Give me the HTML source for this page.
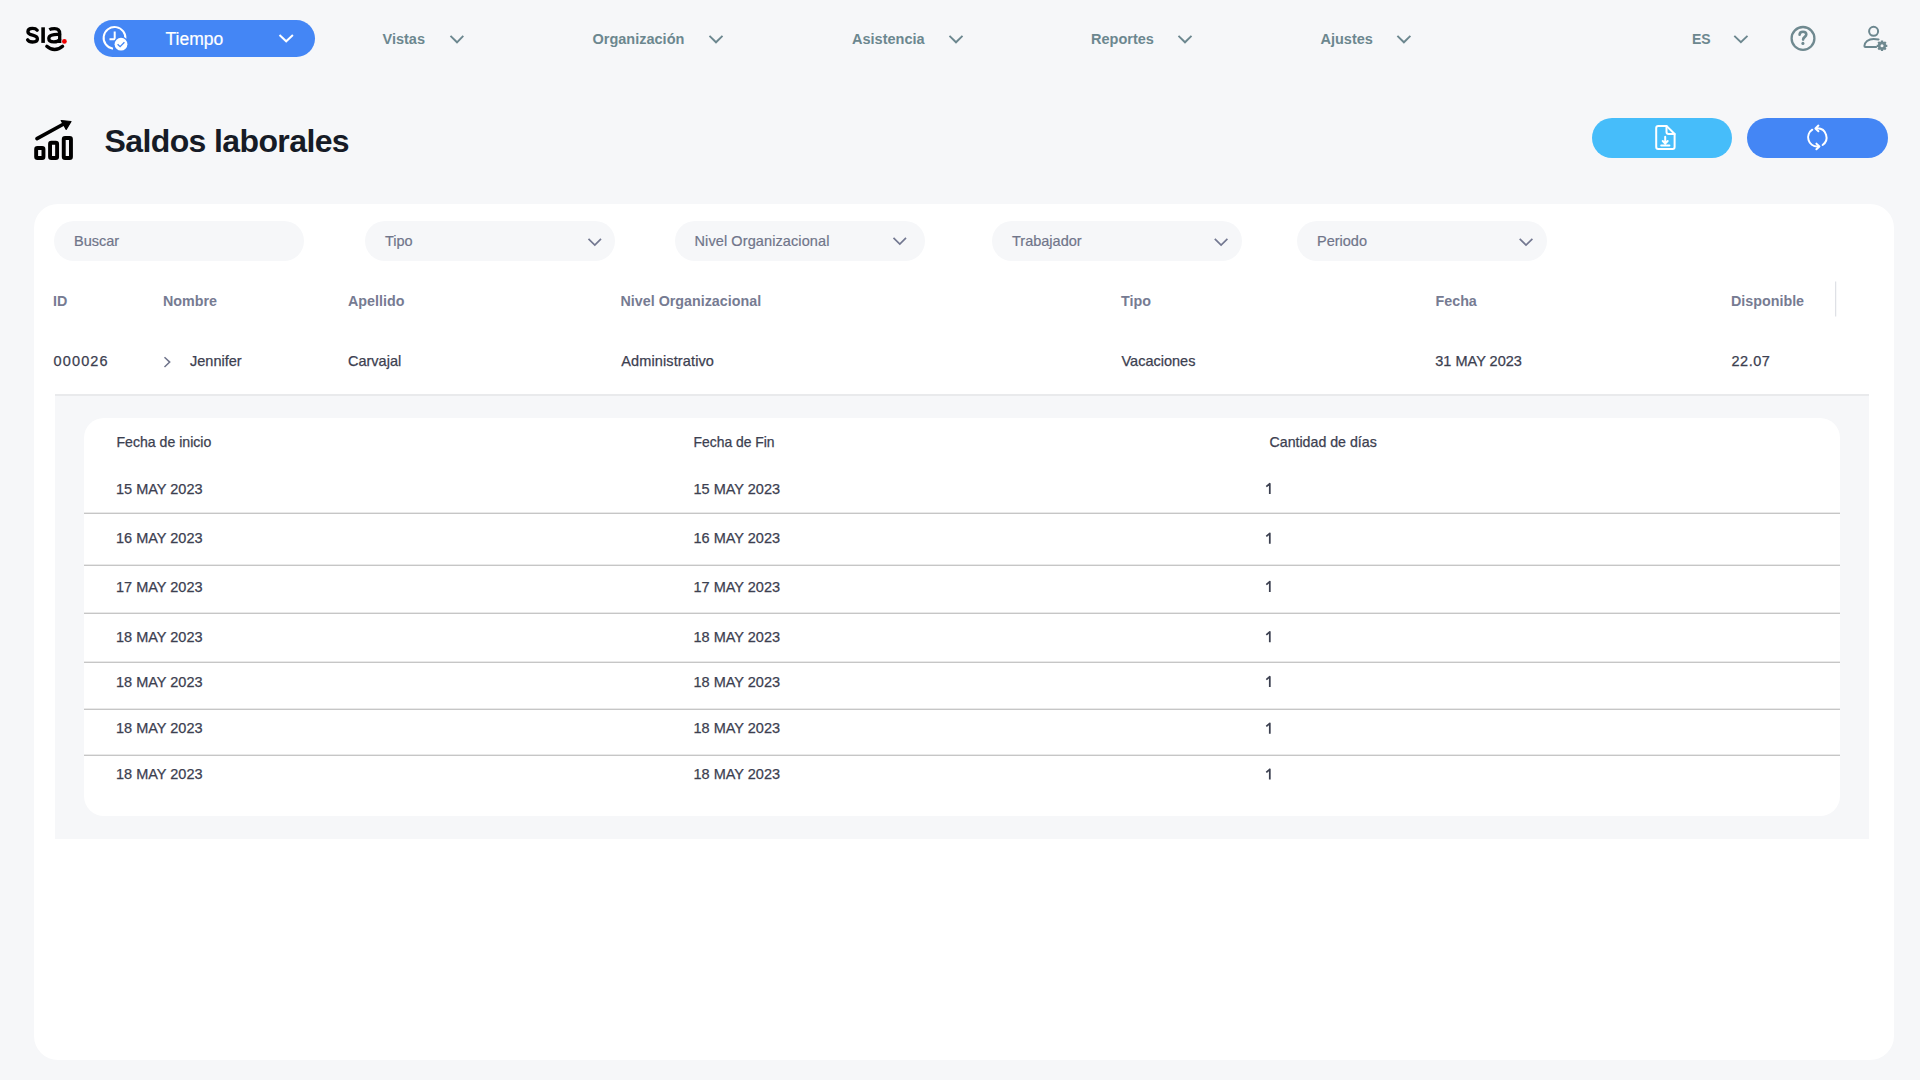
<!DOCTYPE html>
<html lang="es">
<head>
<meta charset="utf-8">
<title>Saldos laborales</title>
<style>
html,body{margin:0;padding:0;}
body{width:1920px;height:1080px;overflow:hidden;background:#F6F7F9;position:relative;font-family:"Liberation Sans",sans-serif;}
.a{position:absolute;white-space:nowrap;line-height:1;}
svg.a{overflow:visible;}
.nav{font-size:14.5px;font-weight:700;color:#6C878F;}
.ph{font-size:14.5px;color:#70758A;-webkit-text-stroke:0.2px #70758A;}
.th{font-size:14.3px;font-weight:700;color:#767B92;}
.td{font-size:14.5px;color:#3C4050;-webkit-text-stroke:0.25px #3C4050;}
.card{position:absolute;left:34px;top:204px;width:1859.5px;height:855.5px;background:#FFFFFF;border-radius:24px;}
.inp{position:absolute;top:221px;width:250px;height:40px;border-radius:20px;background:#F6F7F9;}
.line{position:absolute;left:84px;width:1756px;height:1px;background:#C6C6C6;box-shadow:0 -1px 0 #E9E9E9;}
</style>
</head>
<body>

<!-- ===== TOP NAV ===== -->
<svg class="a" style="left:0;top:0" width="1920" height="80" viewBox="0 0 1920 80">
  <!-- logo sia. -->
  <g fill="none" stroke="#000" stroke-width="3.3" stroke-linecap="round">
    <path d="M37.2 30.2 C36 28.6 34.2 28.4 32.4 28.4 C29.8 28.4 27.9 29.7 27.9 31.8 C27.9 34 30.2 34.6 32.6 35.2 C35.4 35.9 37.4 36.7 37.4 39 C37.4 41.3 35.2 42 32.6 42 C30.3 42 28.5 41.3 27.6 39.8"/>
    <path d="M43.1 27.3 V42.9" stroke-linecap="butt" stroke-width="3.6"/>
    <path d="M49.3 29.6 C50.6 28.9 52.4 28.6 54.6 28.6 C58.4 28.6 59.7 30.6 59.7 33.6 V42.9" stroke-linecap="butt"/>
    <path d="M59.6 34.6 C57 34.3 53.6 34.6 51.4 35.3 C49.6 35.9 48.8 37 48.8 38.6 C48.8 40.6 50.8 41.9 53.8 41.9 C56.6 41.9 58.8 41 59.6 39.6"/>
    <path d="M46.8 46.3 C51.5 50.6 57.8 50.6 62.6 46.3"/>
  </g>
  <circle cx="64.4" cy="41.4" r="2.4" fill="#F00000"/>
</svg>

<!-- Tiempo pill -->
<div class="a" style="left:94px;top:20px;width:221px;height:37px;border-radius:18.5px;background:#4486F5;"></div>
<svg class="a" style="left:0;top:0" width="340" height="80" viewBox="0 0 340 80">
  <path d="M125.3 39.5 A10.9 10.9 0 1 0 113 48.7" fill="none" stroke="#fff" stroke-width="2"/>
  <path d="M114.7 31.5 V39.3 H109.5" fill="none" stroke="#fff" stroke-width="2"/>
  <circle cx="121" cy="44.2" r="7.6" fill="#4486F5"/>
  <circle cx="121" cy="44.2" r="6.4" fill="#fff"/>
  <path d="M117.6 44.2 L120.1 46.7 L124.4 42.3" fill="none" stroke="#4486F5" stroke-width="1.3"/>
  <polyline points="279.5,35 286.2,41.3 292.9,35" fill="none" stroke="#fff" stroke-width="2"/>
</svg>
<div class="a" style="left:165.5px;top:31px;font-size:17.5px;color:#fff;-webkit-text-stroke:0.2px #fff;">Tiempo</div>

<div class="a nav" style="left:382.5px;top:31.8px;">Vistas</div>
<div class="a nav" style="left:592.5px;top:31.8px;">Organización</div>
<div class="a nav" style="left:852px;top:31.8px;">Asistencia</div>
<div class="a nav" style="left:1091px;top:31.8px;">Reportes</div>
<div class="a nav" style="left:1320.5px;top:31.8px;">Ajustes</div>
<div class="a nav" style="left:1692px;top:31.8px;font-size:14px;">ES</div>

<svg class="a" style="left:0;top:0" width="1920" height="80" viewBox="0 0 1920 80">
  <g fill="none" stroke="#6C878F" stroke-width="1.9">
    <polyline points="450.5,35.9 457,42.3 463.3,35.9"/>
    <polyline points="709.5,35.9 716,42.3 722.5,35.9"/>
    <polyline points="949.5,35.9 956,42.3 962.5,35.9"/>
    <polyline points="1178.5,35.9 1185,42.3 1191.5,35.9"/>
    <polyline points="1397.4,35.9 1403.9,42.3 1410.4,35.9"/>
    <polyline points="1734.3,35.9 1740.9,42.3 1747.5,35.9"/>
  </g>
  <!-- help -->
  <circle cx="1803" cy="38.4" r="11.4" fill="none" stroke="#6F8990" stroke-width="2.3"/>
  <path d="M799.6 0" fill="none"/>
  <path d="M1799.6 34.8 C1799.6 32.8 1801.1 31.8 1803 31.8 C1805 31.8 1806.3 33 1806.3 34.6 C1806.3 36.8 1803.1 37 1803.1 39.6" fill="none" stroke="#6F8990" stroke-width="2.6" stroke-linecap="round"/>
  <circle cx="1802.9" cy="43.4" r="1.55" fill="#6F8990"/>
  <!-- user settings -->
  <circle cx="1873.6" cy="31.3" r="4.5" fill="none" stroke="#6C878F" stroke-width="2"/>
  <path d="M1878.6 39.4 C1876.8 39 1875.3 38.9 1873.6 38.9 C1868.5 38.9 1864.4 42.3 1864.4 46.1 C1864.4 46.8 1864.8 47 1865.4 47 H1876.2" fill="none" stroke="#6C878F" stroke-width="2" stroke-linecap="round"/>
  <g transform="translate(1882,45.8)" fill="none" stroke="#6F8990">
    <circle cx="0" cy="0" r="2.9" stroke-width="2.6"/>
    <g stroke-width="2.3" stroke-linecap="butt">
      <path d="M0 -5.3 V5.3 M-5.3 0 H5.3 M-3.75 -3.75 L3.75 3.75 M-3.75 3.75 L3.75 -3.75"/>
    </g>
    <circle cx="0" cy="0" r="1.5" fill="#F6F7F9" stroke="none"/>
  </g>
</svg>

<!-- ===== TITLE ===== -->
<svg class="a" style="left:0;top:100px" width="100" height="80" viewBox="0 100 100 80">
  <g fill="none" stroke="#000" stroke-width="3.9" stroke-linejoin="round">
    <rect x="36.15" y="148.05" width="7.3" height="10" rx="1.3"/>
    <rect x="50.05" y="142.75" width="7.05" height="15.3" rx="1.3"/>
    <rect x="63.75" y="138.05" width="7.2" height="20" rx="1.3"/>
    <path d="M37 138.6 L65.5 123" stroke-linecap="round" stroke-width="3.7"/>
  </g>
  <path d="M61.2 120.5 L71 121.5 L66.2 129.4 Z" fill="#000" stroke="#000" stroke-width="1.2" stroke-linejoin="round"/>
</svg>
<div class="a" style="left:104.6px;top:125.2px;font-size:32px;font-weight:700;color:#161B26;letter-spacing:-0.62px;">Saldos laborales</div>

<!-- action buttons -->
<div class="a" style="left:1592px;top:118px;width:140px;height:40px;border-radius:20px;background:#46BDFA;"></div>
<div class="a" style="left:1747px;top:118px;width:140.5px;height:40px;border-radius:20px;background:#4486F5;"></div>
<svg class="a" style="left:1600px;top:110px" width="300" height="60" viewBox="1600 110 300 60">
  <g fill="none" stroke="#fff" stroke-width="2" stroke-linecap="round" stroke-linejoin="round">
    <path d="M1666.5 125.9 H1658.3 C1657.1 125.9 1656.2 126.8 1656.2 128 V147 C1656.2 148.2 1657.1 149 1658.3 149 H1672.6 C1673.8 149 1674.6 148.2 1674.6 147 V134 Z"/>
    <path d="M1666.5 125.9 V132 C1666.5 133.2 1667.4 134 1668.6 134 H1674.6"/>
    <path d="M1665.2 136.8 V143.4 M1662.7 141 L1665.2 143.5 L1667.7 141 M1661.2 145.4 H1669.4"/>
    <!-- refresh -->
    <path d="M1817.4 128.3 A9.2 9.2 0 0 1 1822.6 145"/>
    <path d="M1818.4 125.6 L1815.4 128.4 L1818.4 131.2"/>
    <path d="M1812.3 129.7 A9.2 9.2 0 0 0 1817.4 146.6"/>
    <path d="M1816.4 143.6 L1819.4 146.5 L1816.4 149.3"/>
  </g>
</svg>

<!-- ===== CARD ===== -->
<div class="card"></div>
<div class="inp" style="left:54px;"></div>
<div class="inp" style="left:365px;"></div>
<div class="inp" style="left:675px;"></div>
<div class="inp" style="left:992px;"></div>
<div class="inp" style="left:1297px;"></div>
<div class="a ph" style="left:74px;top:233.5px;">Buscar</div>
<div class="a ph" style="left:385px;top:233.5px;">Tipo</div>
<div class="a ph" style="left:694.5px;top:233.5px;letter-spacing:0.1px;">Nivel Organizacional</div>
<div class="a ph" style="left:1012px;top:233.5px;">Trabajador</div>
<div class="a ph" style="left:1317px;top:233.5px;">Periodo</div>
<svg class="a" style="left:0;top:200px" width="1920" height="200" viewBox="0 200 1920 200">
  <g fill="none" stroke="#737891" stroke-width="1.7">
    <polyline points="588.5,238.8 594.8,245 601,238.8"/>
    <polyline points="893.5,237.8 899.8,244 906,237.8"/>
    <polyline points="1214.8,238.8 1221.1,245 1227.4,238.8"/>
    <polyline points="1519.7,238.8 1526,245 1532.4,238.8"/>
  </g>
  <polyline points="164.5,357.3 169.7,362.1 164.5,367" fill="none" stroke="#6F748B" stroke-width="1.5"/>
  <rect x="1835.2" y="281.5" width="1" height="35" fill="#D8DAE0"/>
</svg>

<!-- table header -->
<div class="a th" style="left:53px;top:293.8px;">ID</div>
<div class="a th" style="left:163px;top:293.8px;">Nombre</div>
<div class="a th" style="left:348px;top:293.8px;">Apellido</div>
<div class="a th" style="left:620.5px;top:293.8px;">Nivel Organizacional</div>
<div class="a th" style="left:1121px;top:293.8px;">Tipo</div>
<div class="a th" style="left:1435.5px;top:293.8px;">Fecha</div>
<div class="a th" style="left:1731px;top:293.8px;">Disponible</div>

<!-- row -->
<div class="a td" style="left:53.5px;top:353.8px;letter-spacing:1.15px;">000026</div>
<div class="a td" style="left:190px;top:353.8px;">Jennifer</div>
<div class="a td" style="left:348px;top:353.8px;">Carvajal</div>
<div class="a td" style="left:621.3px;top:353.8px;letter-spacing:0.12px;">Administrativo</div>
<div class="a td" style="left:1121.5px;top:353.8px;">Vacaciones</div>
<div class="a td" style="left:1435.3px;top:353.8px;">31 MAY 2023</div>
<div class="a td" style="left:1731.5px;top:353.8px;letter-spacing:0.5px;">22.07</div>

<!-- expanded -->
<div class="a" style="left:55px;top:394px;width:1813.5px;height:2px;background:#E9EAEC;"></div>
<div class="a" style="left:55px;top:396px;width:1813.5px;height:443px;background:#F6F7F9;"></div>
<div class="a" style="left:84px;top:418px;width:1756.4px;height:397.5px;background:#FFFFFF;border-radius:20px;"></div>

<div class="line" style="top:513px;"></div>
<div class="line" style="top:565px;"></div>
<div class="line" style="top:613px;"></div>
<div class="line" style="top:662px;"></div>
<div class="line" style="top:709px;"></div>
<div class="line" style="top:755px;"></div>

<div class="a td" style="left:116.5px;top:435.2px;font-size:14.1px;">Fecha de inicio</div>
<div class="a td" style="left:693.5px;top:435.8px;font-size:13.9px;">Fecha de Fin</div>
<div class="a td" style="left:1269.5px;top:435.2px;font-size:14.2px;">Cantidad de días</div>

<div class="a td" style="left:116px;top:481.7px;">15 MAY 2023</div>
<div class="a td" style="left:693.5px;top:481.7px;">15 MAY 2023</div>

<div class="a td" style="left:116px;top:531.4px;">16 MAY 2023</div>
<div class="a td" style="left:693.5px;top:531.4px;">16 MAY 2023</div>

<div class="a td" style="left:116px;top:579.6px;">17 MAY 2023</div>
<div class="a td" style="left:693.5px;top:579.6px;">17 MAY 2023</div>

<div class="a td" style="left:116px;top:629.9px;">18 MAY 2023</div>
<div class="a td" style="left:693.5px;top:629.9px;">18 MAY 2023</div>

<div class="a td" style="left:116px;top:674.7px;">18 MAY 2023</div>
<div class="a td" style="left:693.5px;top:674.7px;">18 MAY 2023</div>

<div class="a td" style="left:116px;top:721.4px;">18 MAY 2023</div>
<div class="a td" style="left:693.5px;top:721.4px;">18 MAY 2023</div>

<div class="a td" style="left:116px;top:767.3px;">18 MAY 2023</div>
<div class="a td" style="left:693.5px;top:767.3px;">18 MAY 2023</div>

<svg class="a" style="left:0;top:0" width="1920" height="1080" viewBox="0 0 1920 1080"><path d="M1266.3 486.7 L1269.8 483.7 V494.0 M1266.3 536.4 L1269.8 533.4 V543.7 M1266.3 584.6 L1269.8 581.6 V591.9 M1266.3 634.9 L1269.8 631.9 V642.2 M1266.3 679.7 L1269.8 676.7 V687.0 M1266.3 726.4 L1269.8 723.4 V733.7 M1266.3 772.3 L1269.8 769.3 V779.6" fill="none" stroke="#3C4050" stroke-width="1.75" stroke-linejoin="round"/></svg>
</body>
</html>
